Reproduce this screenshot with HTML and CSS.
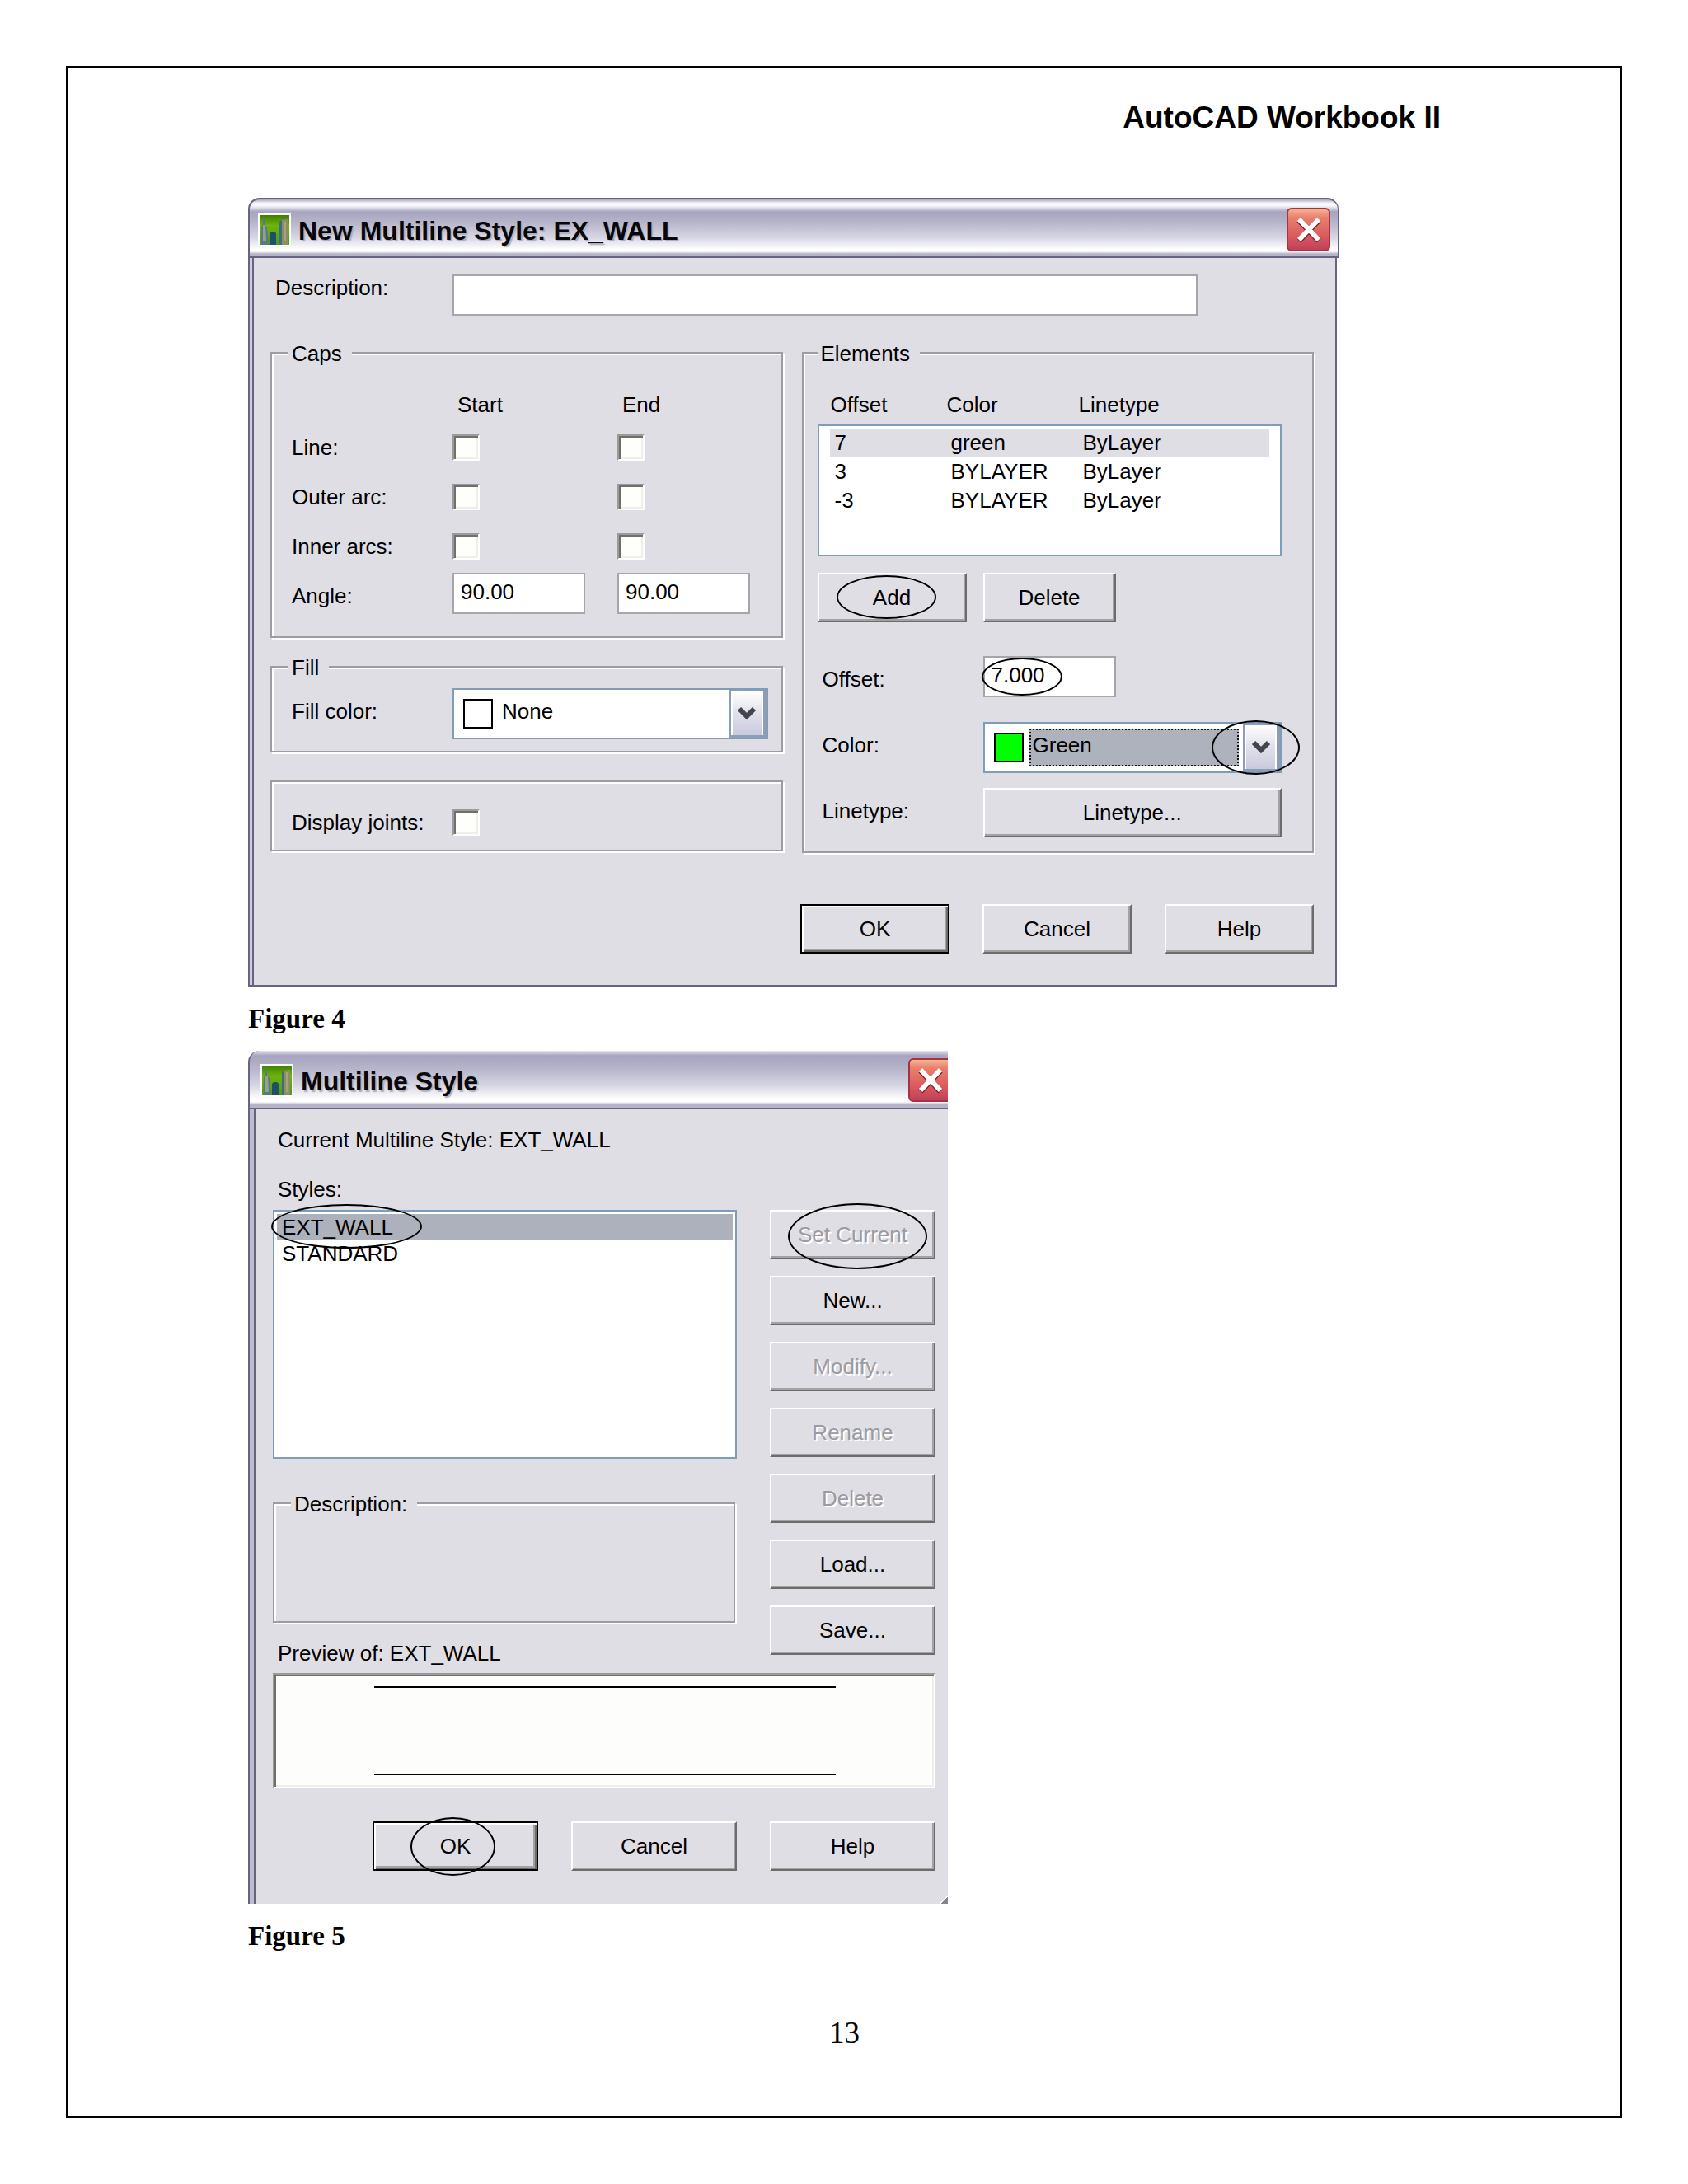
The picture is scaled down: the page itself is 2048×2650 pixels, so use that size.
FILE: index.html
```html
<!DOCTYPE html>
<html lang="en">
<head>
<meta charset="utf-8">
<title>AutoCAD Workbook II</title>
<link rel="stylesheet" href="styles.css">
</head>
<body>
<svg class="defs" width="0" height="0" aria-hidden="true">
  <defs>
    <linearGradient id="sky" x1="0" y1="0" x2="0" y2="1">
      <stop offset="0" stop-color="#3f7f00"/>
      <stop offset=".35" stop-color="#6fb40c"/>
      <stop offset="1" stop-color="#4b9a1c"/>
    </linearGradient>
    <symbol id="app-icon" viewBox="0 0 40 40">
      <rect width="40" height="40" fill="#fff"/>
      <rect x="2" y="2" width="36" height="36" fill="url(#sky)"/>
      <path d="M4 38V16l2-3V8l1-4 1 4v5l3 4 2 21z" fill="#55788c"/>
      <path d="M6 14h3l1 20H6z" fill="#9aa08a"/>
      <path d="M14 38V24l2-2h4l2 2v14z" fill="#1f4f68"/>
      <path d="M26 38V10l3-2v30z" fill="#3d6d80"/>
      <path d="M29 38V8l7-1v31z" fill="#8d8f62"/>
      <path d="M31 10h3v24h-3z" fill="#a9a27a"/>
    </symbol>
    <symbol id="cross" viewBox="0 0 32 32">
      <path d="M4 4l24 25M28 4L4 29" stroke="#7a1c22" stroke-width="7"/>
      <path d="M4 3l24 25M28 3L4 28" stroke="#fff" stroke-width="6"/>
    </symbol>
    <symbol id="chevron" viewBox="0 0 24 18">
      <path d="M3 3l9 9 9-9" fill="none" stroke="#44444c" stroke-width="6"/>
    </symbol>
  </defs>
</svg>

<main class="page">
  <header class="page-header">AutoCAD Workbook II</header>

  <figure class="figure">
    <section class="window window-new">
      <div class="titlebar">
        <svg class="app-icon" aria-hidden="true"><use href="#app-icon"/></svg>
        <h2 class="title">New Multiline Style: EX_WALL</h2>
        <button class="close" type="button" aria-label="Close"><svg class="cross"><use href="#cross"/></svg></button>
      </div>
      <form class="window-body">
        <div class="description-row">
          <label for="description">Description:</label>
          <input class="text-input" id="description" type="text">
        </div>
        <div class="columns">
          <div class="column">
            <fieldset class="group group-caps">
              <legend>Caps</legend>
              <div class="caps-grid">
                <span></span><span id="caps-start">Start</span><span id="caps-end">End</span>
                <label for="line-start">Line:</label>
                <input class="check" id="line-start" type="checkbox">
                <input class="check" type="checkbox" aria-label="Line end">
                <label for="outer-start">Outer arc:</label>
                <input class="check" id="outer-start" type="checkbox">
                <input class="check" type="checkbox" aria-label="Outer arc end">
                <label for="inner-start">Inner arcs:</label>
                <input class="check" id="inner-start" type="checkbox">
                <input class="check" type="checkbox" aria-label="Inner arcs end">
                <label class="field-label" for="angle-start">Angle:</label>
                <input class="text-input short" id="angle-start" type="text" value="90.00">
                <input class="text-input short" type="text" value="90.00" aria-label="Angle end">
              </div>
            </fieldset>
            <fieldset class="group group-fill">
              <legend>Fill</legend>
              <div class="field-row">
                <label class="field-label" for="fill-color">Fill color:</label>
                <div class="combo">
                  <span class="swatch"></span>
                  <select id="fill-color"><option>None</option></select>
                  <span class="combo-arrow"><svg class="chevron"><use href="#chevron"/></svg></span>
                </div>
              </div>
            </fieldset>
            <fieldset class="group group-joints">
              <div class="field-row">
                <label for="joints">Display joints:</label>
                <input class="check" id="joints" type="checkbox">
              </div>
            </fieldset>
          </div>

          <fieldset class="group group-elements">
            <legend>Elements</legend>
            <table class="elements">
              <thead><tr><th>Offset</th><th>Color</th><th>Linetype</th></tr></thead>
              <tbody>
                <tr class="selected"><td>7</td><td>green</td><td>ByLayer</td></tr>
                <tr><td>3</td><td>BYLAYER</td><td>ByLayer</td></tr>
                <tr><td>-3</td><td>BYLAYER</td><td>ByLayer</td></tr>
              </tbody>
            </table>
            <div class="element-buttons">
              <button class="button" type="button">Add<span class="ring ring-add"></span></button>
              <button class="button button-delete" type="button">Delete</button>
            </div>
            <div class="element-fields">
              <label class="field-label" for="offset">Offset:</label>
              <div class="field"><input class="text-input short" id="offset" type="text" value="7.000"><span class="ring ring-offset"></span></div>
              <label class="field-label" for="color">Color:</label>
              <div class="combo combo-focus">
                <span class="swatch swatch-green"></span>
                <select id="color"><option>Green</option></select>
                <span class="combo-arrow"><svg class="chevron"><use href="#chevron"/></svg></span>
                <span class="ring ring-arrow"></span>
              </div>
              <label class="field-label" for="linetype">Linetype:</label>
              <button class="button" id="linetype" type="button">Linetype...</button>
            </div>
          </fieldset>
        </div>
        <div class="actions">
          <button class="button default" type="button">OK</button>
          <button class="button" type="button">Cancel</button>
          <button class="button" type="button">Help</button>
        </div>
      </form>
    </section>
    <figcaption>Figure 4</figcaption>
  </figure>

  <figure class="figure">
    <section class="window window-styles">
      <div class="titlebar">
        <svg class="app-icon" aria-hidden="true"><use href="#app-icon"/></svg>
        <h2 class="title">Multiline Style</h2>
        <button class="close" type="button" aria-label="Close"><svg class="cross"><use href="#cross"/></svg></button>
      </div>
      <form class="window-body">
        <p class="line current">Current Multiline Style: EXT_WALL</p>
        <p class="line" id="styles-label">Styles:</p>
        <div class="styles-grid">
          <div class="styles-main">
            <ul class="style-list" role="listbox" aria-labelledby="styles-label">
              <li class="selected" role="option" aria-selected="true">EXT_WALL</li>
              <li role="option">STANDARD</li>
              <li class="ring ring-style" role="presentation"></li>
            </ul>
            <fieldset class="group group-description"><legend>Description:</legend></fieldset>
            <p class="line">Preview of: EXT_WALL</p>
          </div>
          <div class="styles-side">
            <button class="button" type="button" disabled>Set Current<span class="ring ring-set"></span></button>
            <button class="button" type="button">New...</button>
            <button class="button" type="button" disabled>Modify...</button>
            <button class="button" type="button" disabled>Rename</button>
            <button class="button" type="button" disabled>Delete</button>
            <button class="button" type="button">Load...</button>
            <button class="button" type="button">Save...</button>
          </div>
        </div>
        <div class="preview"><div class="preview-lines"></div></div>
        <div class="actions">
          <button class="button default" type="button">OK<span class="ring ring-ok"></span></button>
          <button class="button" type="button">Cancel</button>
          <button class="button" type="button">Help</button>
        </div>
        <span class="grip"></span>
      </form>
    </section>
    <figcaption>Figure 5</figcaption>
  </figure>

  <footer class="page-number">13</footer>
</main>
</body>
</html>
```
FILE: styles.css
```css
:root {
  --face: #dfdee5;
  --frame: #66647f;
  --lilac: #cfcde0;
  --groove: #9c9ca3;
  --list-border: #7f9db9;
  --ui: "Liberation Sans", Arial, sans-serif;
}

* { box-sizing: border-box; }

body {
  margin: 0;
  padding: 80px;
  background: #fff;
  color: #000;
}

.defs { position: absolute; }

.page {
  border: 2px solid #000;
  padding: 40px 218px 80px 219px;
}

.page-header {
  margin-bottom: 76px;
  font: bold 37px/42px "Liberation Sans", Arial, sans-serif;
  text-align: right;
}

.figure { margin: 0 0 20px; }

figcaption {
  margin-top: 20px;
  font: bold 33px/38px "Liberation Serif", "Times New Roman", serif;
}

.page-number {
  margin-top: 78px;
  font: 37px/42px "Liberation Serif", "Times New Roman", serif;
  text-align: center;
}

/* Windows */

.window {
  width: 100%;
  font: 26px/32px var(--ui);
}

.window-new { max-width: 1323px; }
.window-styles { max-width: 849px; }

.titlebar {
  display: flex;
  align-items: center;
  gap: 9px;
  height: 73px;
  padding: 4px 9px 0 10px;
  border: solid var(--frame);
  border-width: 2px 1px 2px 2px;
  border-radius: 14px 14px 0 0;
  background: linear-gradient(#a9a7bd 0, #fff 5px, #f4f4fa 8px, #a6a4bf 15px, #b6b5cb 28px, #d6d6e3 46px, #fff 61px, #fff 63px, #b4b3c8 66px, #b4b3c8 100%);
}

.window-styles .titlebar {
  height: 71px;
  padding: 2px 0 0 13px;
  border-width: 0 0 2px 2px;
  border-radius: 14px 0 0 0;
  background: linear-gradient(#e4e3ee 0, #a6a4bf 6px, #b6b5cb 22px, #d6d6e3 42px, #fff 59px, #fff 62px, #b4b3c8 65px, #b4b3c8 100%);
  overflow: hidden;
}

.app-icon { width: 40px; height: 40px; flex: none; }

.title {
  flex: 1;
  margin: 0;
  padding-top: 2px;
  font: bold 32px/36px var(--ui);
  color: #08080c;
  text-shadow: 2px 2px 1px #b0b0bc;
}

.close {
  display: grid;
  place-items: center;
  flex: none;
  width: 53px;
  height: 53px;
  padding: 0;
  border: 2px solid #a83244;
  border-radius: 6px;
  background: linear-gradient(#f3b58f 0, #e8806e 10px, #dd5f5f 60%, #c04058);
}

.window-styles .close { margin-right: -5px; }

.cross { width: 32px; height: 32px; }

.window-body {
  position: relative;
  margin-right: 2px;
  padding: 20px 26px 38px 21px;
  border: 2px solid var(--frame);
  border-left: 0;
  border-top: 0;
  background: var(--face);
  box-shadow: inset 2px 0 0 var(--frame), inset 5px 0 0 var(--lilac), inset 7px 0 0 var(--frame);
}

.window-new .window-body { padding-left: 27px; }

.window-styles .window-body {
  margin: 0;
  padding: 21px 15px 40px 30px;
  border: 0;
  box-shadow: inset 2px 0 0 var(--frame), inset 7px 0 0 #bdbcd2, inset 9px 0 0 var(--frame);
}

/* Controls */

.button {
  position: relative;
  height: 60px;
  padding: 0;
  border: 2px solid;
  border-color: #fff #6c6c6a #6c6c6a #fff;
  border-radius: 0;
  background: var(--face);
  box-shadow: inset -2px -2px 0 #a2a1a6;
  font: inherit;
  color: #000;
}

.button.default {
  border-color: #000;
  box-shadow: inset 2px 2px 0 #fff, inset -2px -2px 0 #6c6c6a, inset -4px -4px 0 #a2a1a6;
}

.button:disabled {
  color: #9c9ba2;
  text-shadow: 2px 2px 0 #fff;
}

.text-input {
  width: 100%;
  height: 50px;
  padding: 0 8px 4px;
  border: 2px solid #a5a5aa;
  border-radius: 0;
  background: #fff;
  font: inherit;
  color: #000;
}

.text-input.short { width: 161px; }

.check {
  appearance: none;
  width: 33px;
  height: 32px;
  margin: 0;
  border: 2px solid;
  border-color: #9b9b9c #fff #fff #9b9b9c;
  background: #fefefb;
  box-shadow: inset 2px 2px 0 #6f6f6e, inset -2px -2px 0 #efefea;
}

.group {
  min-width: 0;
  margin: 0;
  padding: 0 0 0 24px;
  border: 2px solid var(--groove);
  box-shadow: 2px 2px 0 #fff, inset 2px 2px 0 #fff;
}

.group legend {
  margin-left: -4px;
  padding: 2px 12px 0 4px;
  background: var(--face);
}

.field-label { padding-top: 12px; }

.combo {
  position: relative;
  display: flex;
  align-items: center;
  height: 62px;
  padding-left: 11px;
  border: 2px solid var(--list-border);
  background: #fff;
}

.swatch {
  flex: none;
  width: 36px;
  height: 36px;
  border: 2px solid #000;
}

.swatch-green { background: #0f0; }

.combo select {
  appearance: none;
  flex: 1;
  min-width: 0;
  height: 46px;
  margin: 0 5px 0 7px;
  padding: 0 2px 6px;
  border: 2px solid transparent;
  border-radius: 0;
  background: transparent;
  font: inherit;
  color: #000;
}

.combo-focus select {
  border: 2px dotted #15151a;
  background: #adb2bc;
}

.combo-arrow {
  display: grid;
  place-items: center;
  width: 45px;
  height: 58px;
  border: solid #8e9db6;
  border-width: 2px 4px 3px 2px;
  background: linear-gradient(#fff, #e3e3ee 45%, #c9c9de);
  box-shadow: inset 2px 0 0 #fff, inset -2px 0 0 #fff;
  pointer-events: none;
}

.chevron { width: 24px; height: 18px; }

/* Hand-drawn marks over the controls */

.ring {
  position: absolute;
  border: 2px solid #000;
  border-radius: 50%;
  pointer-events: none;
}

.ring-add { left: 21px; top: 1px; width: 121px; height: 53px; }
.ring-offset { left: -2px; top: 2px; width: 98px; height: 46px; }
.ring-arrow { right: -24px; top: -4px; width: 107px; height: 66px; }
.style-list .ring-style { left: -4px; top: -9px; width: 183px; height: 54px; }
.ring-set { left: 20px; top: -10px; width: 169px; height: 80px; }
.ring-ok { left: 44px; top: -7px; width: 103px; height: 71px; }

/* New Multiline Style */

.description-row {
  display: grid;
  grid-template-columns: 215px minmax(0, 904px);
  padding-left: 6px;
  margin-bottom: 28px;
}

.columns {
  display: grid;
  grid-template-columns: minmax(0, 1fr) minmax(0, 1fr);
  gap: 23px;
}

.group-caps { padding-bottom: 27px; }

.caps-grid {
  display: grid;
  grid-template-columns: 195px 200px 1fr;
  grid-template-rows: 52px 60px 60px 48px 50px;
  padding-top: 30px;
}

#caps-start, #caps-end { padding-left: 6px; }

.group-fill { margin-top: 18px; padding: 9px 16px 14px 24px; }

.field-row {
  display: grid;
  grid-template-columns: 195px 1fr;
}

.group-joints { margin-top: 34px; padding-top: 33px; padding-bottom: 17px; }

.group-elements { padding: 30px 37px 17px 17px; }
.group-elements legend { margin-left: 0; }

.elements { display: block; }
.elements thead, .elements tbody { display: block; }

.elements tr {
  display: grid;
  grid-template-columns: 141px 160px 1fr;
}

.elements th, .elements td {
  padding: 0;
  font-weight: normal;
  text-align: left;
}

.elements thead tr { height: 40px; padding-left: 16px; }

.elements tbody {
  height: 160px;
  padding: 3px 13px;
  border: 2px solid var(--list-border);
  background: #fff;
}

.elements tbody tr { padding-left: 6px; line-height: 35px; }

.selected { background: var(--face); }

.element-buttons {
  display: grid;
  grid-template-columns: 181px 161px;
  gap: 20px;
  margin: 20px 0 41px;
}

.element-fields {
  display: grid;
  grid-template-columns: 195px 1fr;
  grid-template-rows: 80px 80px 60px;
  padding-left: 6px;
}

.field { position: relative; }

.actions {
  display: flex;
  justify-content: flex-end;
  gap: 40px;
  margin-top: 62px;
}

.actions .button { width: 181px; }

/* Multiline Style */

.line { margin: 0; padding-left: 6px; }

.line.current { margin-bottom: 28px; }

.styles-grid {
  display: grid;
  grid-template-columns: 1fr 201px;
  gap: 40px;
  margin-top: 9px;
}

.style-list {
  position: relative;
  height: 302px;
  margin: 0 0 37px;
  padding: 3px;
  border: 2px solid var(--list-border);
  background: #fff;
  list-style: none;
}

.style-list li { padding-left: 6px; }

.style-list .selected { background: #adb1bb; }

.group-description { height: 162px; margin: 0 2px 21px 0; }

.styles-side {
  display: grid;
  align-content: start;
  gap: 20px;
}

.preview {
  height: 140px;
  margin-top: 8px;
  padding: 14px 119px 14px 121px;
  border: 2px solid;
  border-color: #9b9b9c #fff #fff #9b9b9c;
  background: #fdfefb;
  box-shadow: inset 2px 2px 0 #6f6f6e, inset -2px -2px 0 #efefea;
}

.preview-lines {
  height: 108px;
  border: solid #000;
  border-width: 2px 0;
}

.window-styles .actions { margin-top: 40px; }
.window-styles .actions .button { width: 201px; }

.grip {
  position: absolute;
  right: 0;
  bottom: 0;
  width: 9px;
  height: 9px;
  background: linear-gradient(135deg, transparent 40%, #fff 40% 55%, #85858a 55%);
}
```
